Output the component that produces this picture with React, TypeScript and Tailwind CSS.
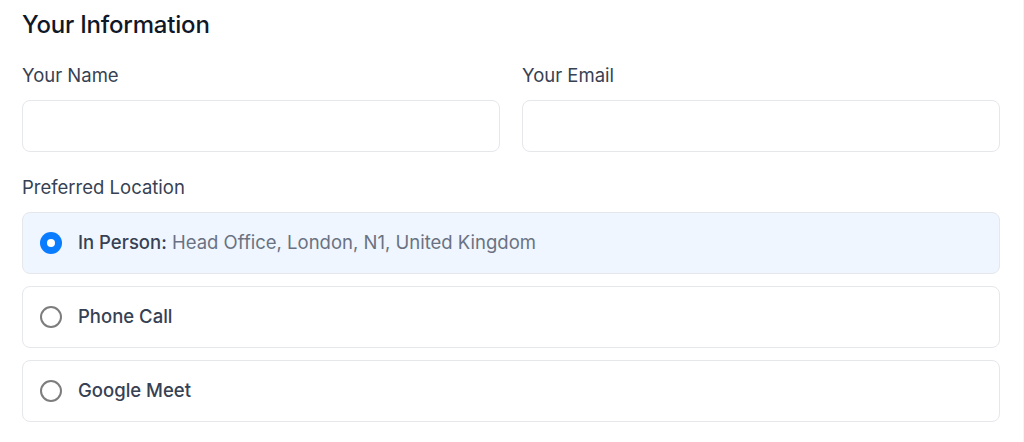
import React, { useState } from 'react';

const locations = [
  { id: 'in-person', title: 'In Person', detail: 'Head Office, London, N1, United Kingdom' },
  { id: 'phone', title: 'Phone Call' },
  { id: 'meet', title: 'Google Meet' },
];

const App = () => {
  const [selected, setSelected] = useState('in-person');

  return (
    <div className="min-h-[442px] w-[1024px] bg-white border-r border-gray-100 font-['Inter',sans-serif]">
      <div className="pl-[22px] pr-[23px] pt-[10px]">
        <h2 className="text-[24px] leading-[30px] font-medium text-gray-900 tracking-[-0.2px]">Your Information</h2>

        {/* Name / Email */}
        <div className="grid grid-cols-2 gap-[22px] mt-[23px]">
          <div>
            <label className="block text-[18.5px] leading-[24px] text-gray-700">Your Name</label>
            <input type="text" className="mt-[13px] block w-full h-[52px] rounded-lg border border-gray-200 bg-white px-3" />
          </div>
          <div>
            <label className="block text-[18.5px] leading-[24px] text-gray-700">Your Email</label>
            <input type="email" className="mt-[13px] block w-full h-[52px] rounded-lg border border-gray-200 bg-white px-3" />
          </div>
        </div>

        {/* Location */}
        <label className="block mt-[23px] text-[18.5px] leading-[24px] text-gray-700">Preferred Location</label>
        <div className="mt-[13px] flex flex-col gap-[12px]">
          {locations.map((loc) => {
            const active = selected === loc.id;
            return (
              <div
                key={loc.id}
                onClick={() => setSelected(loc.id)}
                className={`flex items-center h-[62px] rounded-lg border border-gray-200 px-[17px] cursor-pointer ${
                  active ? 'bg-blue-50' : 'bg-white'
                }`}
              >
                {active ? (
                  <span className="w-[22px] h-[22px] rounded-full bg-[#0a7cff] flex items-center justify-center">
                    <span className="w-[8px] h-[8px] rounded-full bg-white"></span>
                  </span>
                ) : (
                  <span className="w-[22px] h-[22px] rounded-full border-2 border-[#7d7d7d] bg-white"></span>
                )}
                <span className="ml-[16px] text-[18.5px] font-medium text-gray-700">
                  {loc.title}
                  {loc.detail && (
                    <>
                      :<span className="font-normal text-gray-500"> {loc.detail}</span>
                    </>
                  )}
                </span>
              </div>
            );
          })}
        </div>
      </div>
    </div>
  );
};

export default App;
